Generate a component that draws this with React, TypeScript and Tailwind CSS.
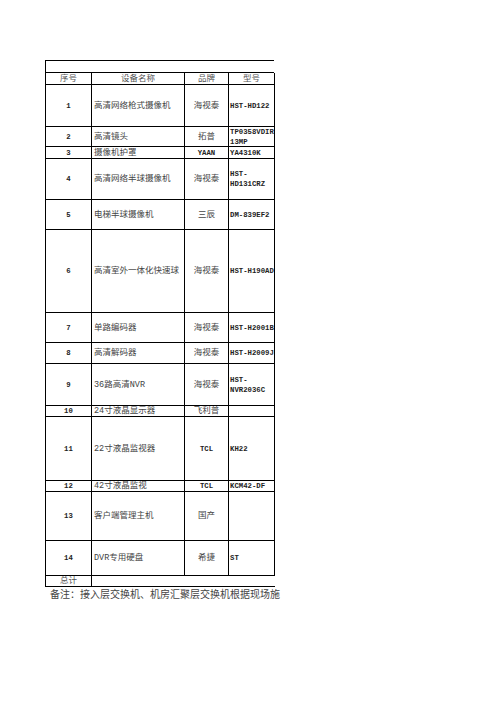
const FONT = "font-['Liberation_Mono','Noto_Sans_CJK_SC',monospace]"

const ROWS = [
  { no: '1', name: '高清网络枪式摄像机', brand: '海视泰', model: ['HST-HD122'], h: 'h-[42px]' },
  { no: '2', name: '高清镜头', brand: '拓普', model: ['TP0358VDIR', '13MP'], h: 'h-[20px]' },
  { no: '3', name: '摄像机护罩', brand: 'YAAN', model: ['YA4310K'], h: 'h-[12px]' },
  { no: '4', name: '高清网络半球摄像机', brand: '海视泰', model: ['HST-', 'HD131CRZ'], h: 'h-[41px]' },
  { no: '5', name: '电梯半球摄像机', brand: '三辰', model: ['DM-839EF2'], h: 'h-[30px]' },
  { no: '6', name: '高清室外一体化快速球', brand: '海视泰', model: ['HST-H190AD'], h: 'h-[83px]' },
  { no: '7', name: '单路编码器', brand: '海视泰', model: ['HST-H2001B'], h: 'h-[30px]' },
  { no: '8', name: '高清解码器', brand: '海视泰', model: ['HST-H2009J'], h: 'h-[21px]' },
  { no: '9', name: '36路高清NVR', brand: '海视泰', model: ['HST-', 'NVR2036C'], h: 'h-[42px]' },
  { no: '10', name: '24寸液晶显示器', brand: '飞利普', model: [], h: 'h-[11px]' },
  { no: '11', name: '22寸液晶监视器', brand: 'TCL', model: ['KH22'], h: 'h-[64px]' },
  { no: '12', name: '42寸液晶监视', brand: 'TCL', model: ['KCM42-DF'], h: 'h-[11px]' },
  { no: '13', name: '客户端管理主机', brand: '国产', model: [], h: 'h-[49px]' },
  { no: '14', name: 'DVR专用硬盘', brand: '希捷', model: ['ST'], h: 'h-[35px]' },
]

const cell = 'flex items-center overflow-hidden border-r border-b border-black'

export default function App() {
  return (
    <div className={`min-h-screen w-[496px] bg-white pl-[45px] pt-[60px] ${FONT}`}>
      {/* empty title row */}
      <div className="h-[12px] w-[229px] border-l border-t border-black" />

      <div className="grid w-[229px] grid-cols-[46px_93px_44px_46px] border-l border-t border-black text-[8.5px] leading-[10px]">
        {/* header */}
        <div className={`${cell} h-[12px] justify-center text-[#555]`}>序号</div>
        <div className={`${cell} h-[12px] justify-center text-[#555]`}>设备名称</div>
        <div className={`${cell} h-[12px] justify-center text-[#555]`}>品牌</div>
        <div className={`${cell} h-[12px] justify-center text-[#555]`}>型号</div>

        {ROWS.map((r) => (
          <div key={r.no} className="contents">
            <div className={`${cell} ${r.h} justify-center text-[7.3px] font-bold text-[#222]`}>{r.no}</div>
            <div className={`${cell} ${r.h} whitespace-nowrap pl-[2px] text-[#444]`}>{r.name}</div>
            <div className={`${cell} ${r.h} justify-center whitespace-nowrap text-[#444]`}>
              <span className={/^[A-Z]+$/.test(r.brand) ? 'text-[7.3px] font-bold text-[#222]' : ''}>{r.brand}</span>
            </div>
            <div className={`${cell} ${r.h} pl-[1px] text-[7.3px] font-bold text-[#222]`}>
              <div className="flex flex-col whitespace-nowrap">
                {r.model.map((m) => (
                  <span key={m}>{m}</span>
                ))}
              </div>
            </div>
          </div>
        ))}

        {/* total row */}
        <div className={`${cell} h-[11px] justify-center text-[#555]`}>总计</div>
        <div className="col-span-3 h-[11px] border-b border-black" />
      </div>

      {/* note */}
      <div className="mt-[2px] whitespace-nowrap pl-[5px] text-[10px] leading-[13px] text-[#444]">
        备注：接入层交换机、机房汇聚层交换机根据现场施
      </div>
    </div>
  )
}
